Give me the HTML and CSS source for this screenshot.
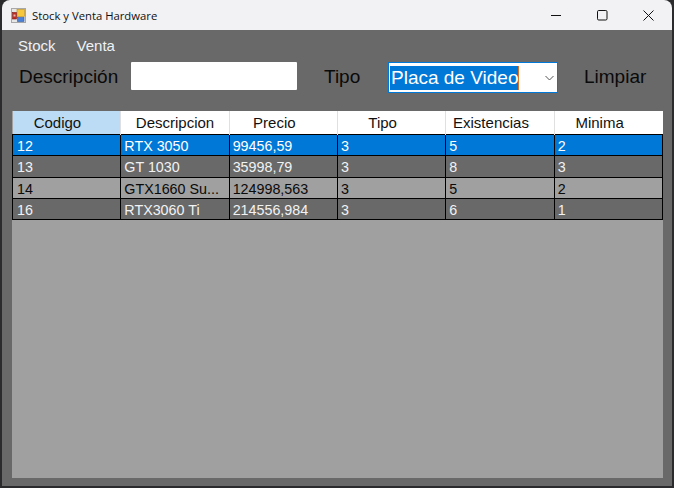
FILE: index.html
```html
<!DOCTYPE html>
<html lang="en">
<head>
    <meta charset="UTF-8">
    <meta name="viewport" content="width=device-width, initial-scale=1.0">
    <title>Stock y Venta Hardware</title>
    <link rel="stylesheet" href="styles.css">
</head>
<body>
    <div class="window">
        <header class="titlebar">
            <svg class="app-icon" width="15" height="15" viewBox="0 0 15 15">
                <rect x="0.5" y="0.5" width="14" height="14" fill="#e6e6e6" stroke="#a8a8a8"/>
                <rect x="6" y="1.5" width="7.5" height="7" fill="#f6c63c" stroke="#b98a1c" stroke-width="0.6"/>
                <rect x="1.5" y="4.5" width="4" height="6.5" fill="#c8281e" stroke="#7c1a14" stroke-width="0.6"/>
                <rect x="2.5" y="6.5" width="2" height="2" fill="#f2b0a8"/>
                <rect x="6.5" y="9.5" width="6.5" height="4" fill="#4a80d8" stroke="#2c5aa8" stroke-width="0.6"/>
            </svg>
            <span class="title">Stock y Venta Hardware</span>
            <div class="controls">
                <svg width="11" height="11" viewBox="0 0 11 11"><path d="M0 5.5h10" stroke="#111" fill="none"/></svg>
                <svg width="11" height="11" viewBox="0 0 11 11"><rect x="0.5" y="0.5" width="9.5" height="9.5" rx="1.2" stroke="#111" fill="none"/></svg>
                <svg width="11" height="11" viewBox="0 0 11 11"><path d="M0.5 0.5l10 10M10.5 0.5l-10 10" stroke="#111" fill="none"/></svg>
            </div>
        </header>
        <main class="content">
            <nav class="menu">
                <span>Stock</span>
                <span>Venta</span>
            </nav>
            <div class="filters">
                <label class="lbl lbl-desc">Descripción</label>
                <input class="txt" type="text">
                <label class="lbl lbl-tipo">Tipo</label>
                <div class="combo">
                    <span class="combo-val">Placa de Video</span>
                    <svg width="9" height="6" viewBox="0 0 9 6"><path d="M0.5 1l4 4 4-4" stroke="#555" fill="none"/></svg>
                </div>
                <span class="lbl lbl-clear">Limpiar</span>
            </div>
            <div class="grid">
                <table>
                    <thead>
                        <tr>
                            <th class="active">Codigo</th>
                            <th class="wide">Descripcion</th>
                            <th>Precio</th>
                            <th>Tipo</th>
                            <th>Existencias</th>
                            <th>Minima</th>
                        </tr>
                    </thead>
                    <tbody>
                        <tr class="selected"><td>12</td><td>RTX 3050</td><td>99456,59</td><td>3</td><td>5</td><td>2</td></tr>
                        <tr class="dark tall"><td>13</td><td>GT 1030</td><td>35998,79</td><td>3</td><td>8</td><td>3</td></tr>
                        <tr class="light"><td>14</td><td>GTX1660 Su...</td><td>124998,563</td><td>3</td><td>5</td><td>2</td></tr>
                        <tr class="dark"><td>16</td><td>RTX3060 Ti</td><td>214556,984</td><td>3</td><td>6</td><td>1</td></tr>
                    </tbody>
                </table>
            </div>
        </main>
    </div>
</body>
</html>
```

FILE: styles.css
```css
html, body {
    margin: 0;
    padding: 0;
    height: 100%;
}
body {
    background-color: #2b2b2d;
    font-family: "Liberation Sans", Arial, sans-serif;
    overflow: hidden;
}
.window {
    margin: 0 2px;
    height: 486px;
    display: flex;
    flex-direction: column;
    border-radius: 8px 8px 0 0;
    overflow: hidden;
}
.titlebar {
    height: 30px;
    flex: none;
    background-color: #f2f2f4;
    display: flex;
    align-items: center;
    padding-left: 9px;
    color: #111;
}
.app-icon {
    margin-right: 6px;
}
.title {
    font-family: "Open Sans", sans-serif;
    font-size: 11.3px;
}
.controls {
    margin-left: auto;
    display: flex;
    gap: 35px;
    padding-right: 18px;
}
.content {
    flex: 1;
    background-color: #696969;
    padding: 0 9px 8px 10px;
    display: flex;
    flex-direction: column;
}
.menu {
    height: 30px;
    padding: 0 0 2px 6px;
    display: flex;
    align-items: center;
    gap: 21px;
    color: #eef2f6;
    font-size: 15px;
}
.filters {
    height: 32px;
    display: flex;
    align-items: flex-start;
    color: #0a0a0a;
    margin-bottom: 17px;
}
.lbl {
    font-size: 19px;
    line-height: 30px;
}
.lbl-desc {
    margin-left: 7px;
    width: 112px;
    flex: none;
}
.txt {
    width: 166px;
    height: 28px;
    flex: none;
    box-sizing: border-box;
    border: none;
    border-radius: 1px;
    background-color: white;
    padding: 0;
}
.lbl-tipo {
    margin-left: 27px;
    width: 64px;
    flex: none;
}
.combo {
    width: 170px;
    height: 31px;
    flex: none;
    box-sizing: border-box;
    border: 1px solid #0078d7;
    background-color: white;
    display: flex;
    align-items: center;
    padding: 0 3px 0 1px;
    justify-content: space-between;
}
.combo-val {
    background-color: #0078d7;
    color: white;
    font-size: 19px;
    line-height: 24px;
    width: 129px;
    padding-left: 1px;
    border-right: 1px solid #e07020;
    box-sizing: border-box;
    white-space: nowrap;
}
.lbl-clear {
    margin-left: 26px;
}
.grid {
    flex: 1;
    background-color: #a0a0a0;
}
table {
    width: 651px;
    table-layout: fixed;
    border-collapse: collapse;
    font-size: 14.3px;
}
th {
    height: 23px;
    padding: 0 18px 0 0;
    background-color: white;
    color: #111;
    font-size: 15px;
    font-weight: normal;
    border-right: 1px solid #e0e0e0;
    white-space: nowrap;
}
th.wide {
    padding-right: 0;
}
th:last-child {
    border-right: none;
}
th.active {
    background-color: #bbdcf4;
}
td {
    height: 19px;
    padding: 1px 0 0 3px;
    border: 1px solid black;
    white-space: nowrap;
    overflow: hidden;
}
td:first-child {
    padding-left: 4px;
}
.tall td {
    height: 20px;
}
.selected td {
    background-color: #0078d7;
    color: white;
}
.dark td {
    background-color: #696969;
    color: #f2f2f2;
}
.light td {
    background-color: #a0a0a0;
    color: #0a0a0a;
}
```
